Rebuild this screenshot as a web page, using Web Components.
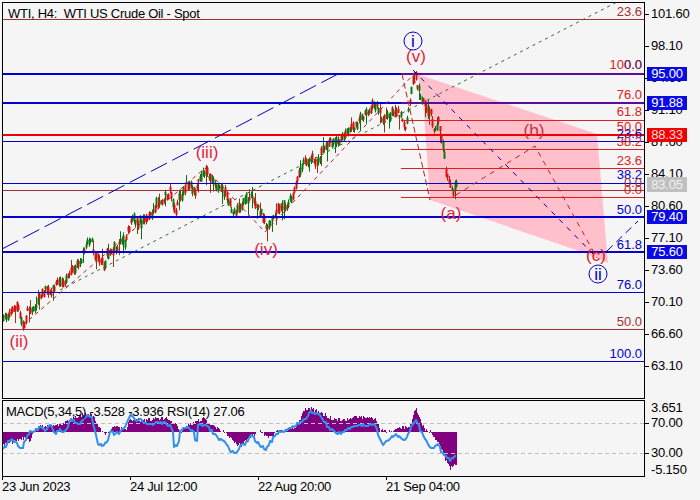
<!DOCTYPE html>
<html><head><meta charset="utf-8"><style>
html,body{margin:0;padding:0;background:#f5f5f5;}
body{width:700px;height:500px;overflow:hidden;font:12px "Liberation Sans",Arial,sans-serif;color:#000;}
</style></head><body>
<fx-chart>
  <price-pane slot="main">WTI, H4:&nbsp; WTI US Crude Oil - Spot</price-pane>
  <price-axis slot="main-axis"></price-axis>
  <osc-pane slot="sub">MACD(5,34,5) -3.528 -3.936 RSI(14) 27.06</osc-pane>
  <osc-axis slot="sub-axis"></osc-axis>
  <time-axis slot="time">
    <time-tick>23 Jun 2023</time-tick><time-tick>24 Jul 12:00</time-tick><time-tick>22 Aug 20:00</time-tick><time-tick>21 Sep 04:00</time-tick>
  </time-axis>
</fx-chart>
<script>
function rng(seed){let s=seed;return()=>{s=(s*1664525+1013904223)>>>0;return s/4294967296;};}
function interp(p,x){for(let i=1;i<p.length;i++){if(x<=p[i][0]){const a=p[i-1],b=p[i];return a[1]+(b[1]-a[1])*(x-a[0])/(b[0]-a[0]);}}return p[p.length-1][1];}
const PRICE=[[3,320],[7,315],[12,308],[18,306],[20,322],[23,328],[27,310],[30,308],[36,305],[40,296],[45,290],[50,295],[55,285],[60,280],[65,285],[70,270],[80,265],[83,250],[87,240],[90,238],[95,255],[100,262],[105,265],[107,252],[112,250],[118,245],[125,240],[130,225],[132,220],[140,222],[150,215],[155,205],[160,205],[165,195],[170,192],[175,212],[178,200],[187,184],[195,190],[203,172],[206,170],[210,180],[218,187],[225,193],[230,205],[235,217],[240,205],[245,200],[250,197],[255,203],[260,212],[265,225],[268,228],[272,218],[278,208],[285,207],[290,200],[295,190],[300,170],[305,160],[312,157],[316,163],[320,155],[325,148],[333,140],[340,142],[347,128],[352,130],[358,122],[365,115],[372,107],[377,105],[382,120],[388,115],[395,112],[400,115],[405,130],[410,95],[412,82],[415,77],[418,90],[423,100],[427,112],[430,110],[433,133],[438,123],[443,147],[445,170],[450,183],[453,192],[456,186]];
const HIST=[[3,445],[15,441],[25,437],[30,441],[33,432],[36,428],[40,426],[50,427],[60,425],[70,420],[80,415],[90,414],[95,420],[100,430],[105,434],[110,432],[113,426],[125,430],[130,420],[145,420],[165,418],[175,424],[180,432],[188,425],[195,422],[203,418],[210,425],[220,430],[225,432],[235,443],[240,446],[250,436],[260,432],[270,438],[275,432],[285,430],[295,427],[305,409],[310,408],[320,412],[330,418],[340,420],[350,418],[360,417],[375,418],[380,430],[385,432],[395,430],[400,428],[410,425],[415,408],[420,420],[425,430],[430,432],[433,437],[440,445],[445,460],[450,468],[456,463]];
const RSI=[[3,450],[8,442],[12,440],[18,445],[22,450],[25,440],[30,432],[35,430],[40,428],[45,430],[50,425],[55,433],[60,430],[65,432],[70,420],[80,423],[88,415],[92,418],[95,432],[98,445],[102,445],[107,443],[110,430],[115,435],[125,427],[130,415],[135,420],[140,420],[150,425],[155,423],[165,423],[172,428],[174,446],[178,446],[180,430],[185,428],[193,430],[196,445],[198,425],[205,425],[215,435],[220,440],[225,443],[230,450],[235,455],[240,445],[245,445],[250,435],[255,440],[260,445],[265,450],[272,440],[278,432],[285,432],[295,425],[305,420],[310,412],[320,415],[330,430],[340,433],[350,428],[360,425],[375,425],[378,435],[382,445],[388,440],[395,435],[405,440],[410,430],[416,418],[420,430],[425,440],[432,448],[438,445],[443,455],[450,460],[456,456]];

function candles(){
  const r=rng(77);let s='';
  for(let x=3;x<=456;x+=1.5){
    const px=Math.round(x);
    const c=interp(PRICE,x)+(r()-.5)*7;
    const up=r()<.42;
    const h=2+r()*6;
    const hi=c-h/2-r()*3-(r()<.1?6:0),lo=c+h/2+r()*3+(r()<.14?9:0);
    s+=`<path d="M${px+.5} ${hi.toFixed(1)}V${lo.toFixed(1)}" stroke="${up?'#0b6e12':'#8a3a10'}" stroke-width="1"/>`;
    s+=`<path d="M${px+.5} ${(c-h/2).toFixed(1)}V${(c+h/2).toFixed(1)}" stroke="${up?'#0a7a10':'#dc1010'}" stroke-width="2"/>`;
  }
  return s;
}
const H=(y,w,c,x1=3)=>`<line x1="${x1}" x2="644" y1="${y}" y2="${y}" stroke="${c}" stroke-width="${w}"/>`;
const BLUE='#0000d0',RED='#dc1c1c',DRED='#dc2020',BROWN='#a03034',WAVE='#e4203c';
const L=(t,y,c)=>`<text x="642" y="${y}" text-anchor="end" fill="${c}">${t}</text>`;
const W=(t,x,y,c=WAVE)=>`<text x="${x}" y="${y}" text-anchor="middle" fill="${c}" class="w">${t}</text>`;

class PricePane extends HTMLElement{
  constructor(){super();const sh=this.attachShadow({mode:'open'});
  sh.innerHTML=`<style>
  :host{display:block;position:relative;box-sizing:border-box;width:643px;height:397px;border:1px solid #000;background:#f5f5f5;overflow:hidden}
  svg{display:block;width:641px;height:395px}
  text{font:13px "Liberation Sans",Arial,sans-serif}
  text.w{font-size:17px}
  .t{position:absolute;left:5px;top:1px;font:13px/20px "Liberation Sans",Arial,sans-serif;letter-spacing:-.28px;color:#000;white-space:pre}
  </style>
  <svg viewBox="3 3 641 395" xmlns="http://www.w3.org/2000/svg">
  <polygon points="417,74 597,134 608,263 585,253 430,200 423,100" fill="#ffc0cb"/>
  <g>${candles()}</g>
  <g shape-rendering="crispEdges">
  ${H(19.5,1,BROWN)}
  ${H(74,2,BLUE)}${H(74,2,'#5a0c9c',401)}
  ${H(103,2,BLUE)}${H(103,2,'#5a0c9c',401)}
  ${H(120.5,1,DRED,401)}
  ${H(135,2,'#f00000')}
  ${H(141.5,1,BLUE)}
  ${H(149.5,1,DRED,401)}
  ${H(168.5,1,DRED,401)}
  ${H(183.5,1,BLUE)}
  ${H(190.5,1,BROWN)}
  ${H(197.5,1,DRED,401)}
  ${H(217,2,BLUE)}
  ${H(252,2,BLUE)}
  ${H(292.5,1,BLUE)}
  ${H(329.5,1,BROWN)}
  ${H(361.5,1,BLUE)}
  </g>
  <g fill="none" stroke-width="1">
    <path d="M2 249L338 74" stroke="#0000c0" stroke-dasharray="18 6"/>
    <path d="M607 251L638 221" stroke="#0000c0" stroke-dasharray="8 5"/>
    <path d="M60 290L617 2" stroke="#2c6e2c" stroke-dasharray="3 4"/>
    <path d="M23 325L205 168L265 232L415 73" stroke="#c02020" stroke-dasharray="4 4"/>
    <path d="M402 74L430 200" stroke="#c02020" stroke-dasharray="6 3"/>
    <path d="M413 70L597 258" stroke="#00008c" stroke-dasharray="5 6"/>
    <path d="M456 195L535 146L597 258" stroke="#c02020" stroke-dasharray="5 5"/>
  </g>
  <g>
  ${L('23.6',16,BROWN)}
  ${L('100.0',69,DRED)}${L('0.0',69,'#5a2a6a')}
  ${L('76.0',99,DRED)}
  ${L('61.8',116,DRED)}
  ${L('23.6',138,BLUE)}
  ${L('50.0',131,DRED)}
  ${L('38.2',146,DRED)}
  ${L('23.6',165,DRED)}
  ${L('38.2',179,BLUE)}
  ${L('0.0',187,BROWN)}
  ${L('0.0',194,DRED)}
  ${L('50.0',214,BLUE)}
  ${L('61.8',249,BLUE)}
  ${L('76.0',289,BLUE)}
  ${L('50.0',326,BROWN)}
  ${L('100.0',358,BLUE)}
  </g>
  ${W('(ii)',19,347)}${W('(iii)',207,158)}${W('(iv)',266,255)}${W('(v)',416,62)}
  ${W('(a)',451,219)}${W('(b)',534,136,'#c8303c')}${W('(c)',596,261,'#f01010')}
  <circle cx="413" cy="41" r="9" fill="none" stroke="#0000c8"/>
  <circle cx="598" cy="274" r="9" fill="none" stroke="#0000c8"/>
  ${W('i',413,47,'#0000c8')}${W('ii',598,280,'#0000c8')}
  </svg><div class="t"><slot></slot></div>`;}
}
class OscPane extends HTMLElement{
  constructor(){super();const sh=this.attachShadow({mode:'open'});
  const r=rng(5);let bars='';
  for(let x=3;x<=456;x++){const y=interp(HIST,x)+(r()-.5)*4;bars+=`<path d="M${x+.5} 432V${y.toFixed(1)}"/>`;}
  const r2=rng(9);let pts=[];
  for(let x=3;x<=456;x+=1.5){const y=interp(RSI,x)+(r2()-.5)*3;pts.push(Math.round(x)+','+Math.round(y));}
  sh.innerHTML=`<style>
  :host{display:block;position:relative;box-sizing:border-box;width:643px;height:77px;border:1px solid #000;background:#f5f5f5;overflow:hidden}
  svg{display:block;width:641px;height:75px}
  .t{position:absolute;left:3px;top:1px;font:13px/20px "Liberation Sans",Arial,sans-serif;letter-spacing:-.25px;color:#000;white-space:pre}
  </style>
  <svg viewBox="3 401 641 75" xmlns="http://www.w3.org/2000/svg">
  <g stroke="#800080" stroke-width="1" shape-rendering="crispEdges">${bars}</g>
  <g stroke="#c0c0c0" stroke-dasharray="4 3" shape-rendering="crispEdges"><line x1="3" x2="644" y1="423.5" y2="423.5"/><line x1="3" x2="644" y1="453.5" y2="453.5"/></g>
  <polyline points="${pts.join(' ')}" fill="none" stroke="#3090ee" stroke-width="2" stroke-linejoin="round"/>
  </svg><div class="t"><slot></slot></div>`;}
}
class PriceAxis extends HTMLElement{
  constructor(){super();const sh=this.attachShadow({mode:'open'});
  const vals=['101.60','98.10','94.60','91.10','87.60','84.10','80.60','77.10','73.60','70.10','66.60','63.10'];
  const tags=[['95.00',67,'#0a0ae6','#fff',14],['91.88',96,'#0a0ae6','#fff',14],['88.33',128,'#f00000','#ffd8d8',14],['83.05',177,'#c0c0c0','#f0f0f0',15],['79.40',210,'#0a0ae6','#fff',14],['75.60',245,'#0a0ae6','#fff',14]];
  sh.innerHTML=`<style>
  :host{display:flex;flex-direction:column;gap:16px;position:relative;box-sizing:border-box;width:55px;height:397px;padding-top:4px;font:13px/16px "Liberation Sans",Arial,sans-serif;letter-spacing:-.2px;color:#000;background:#f5f5f5}
  .r{display:flex;align-items:center;height:16px;flex:none}
  .r::before{content:"";width:4px;height:1px;background:#000;margin-right:2px}
  .tag{position:absolute;left:2px;width:40px;text-align:center;font:13px/14px "Liberation Sans",Arial,sans-serif}
  </style>${vals.map(v=>`<div class="r">${v}</div>`).join('')}
  ${tags.map(t=>`<div class="tag" style="top:${t[1]-2}px;height:${t[4]}px;line-height:${t[4]}px;background:${t[2]};color:${t[3]}">${t[0]}</div>`).join('')}`;}
}
class OscAxis extends HTMLElement{
  constructor(){super();const sh=this.attachShadow({mode:'open'});
  sh.innerHTML=`<style>
  :host{display:grid;grid-template-rows:14px 14px 14px 14px;box-sizing:border-box;width:55px;height:77px;padding-top:1px;font:13px/14px "Liberation Sans",Arial,sans-serif;letter-spacing:-.2px;color:#000;background:#f5f5f5}
  div{display:flex;align-items:center;padding-left:6px;position:relative;height:14px}
  .k::before{content:"";position:absolute;left:0;width:4px;height:1px;background:#000;top:7px}
  .a{margin-top:1px}.b{margin-top:17px}.c{margin-top:20px}
  </style><div>3.651</div><div class="k a">70.00</div><div class="k b">30.00</div><div class="c">-5.150</div>`;}
}
class TimeAxis extends HTMLElement{
  constructor(){super();this.attachShadow({mode:'open'}).innerHTML=`<style>
  :host{display:grid;grid-template-columns:repeat(4,128px);height:23px;padding-left:2px;font:13px/14px "Liberation Sans",Arial,sans-serif;letter-spacing:-.3px;color:#000}
  </style><slot></slot>`;}
}
class TimeTick extends HTMLElement{
  constructor(){super();this.attachShadow({mode:'open'}).innerHTML=`<style>
  :host{display:block;white-space:nowrap}
  i{display:block;width:1px;height:3px;background:#000}
  span{display:block;margin-top:0}
  </style><i></i><span><slot></slot></span>`;}
}
class FxChart extends HTMLElement{
  constructor(){super();this.attachShadow({mode:'open'}).innerHTML=`<style>
  :host{display:grid;grid-template-columns:643px 55px;grid-template-rows:397px 77px 23px;row-gap:1px;width:700px;height:500px;box-sizing:border-box;padding:2px 0 0 2px;background:#f5f5f5}
  .time{grid-column:1 / 3;margin-left:-2px;margin-top:-1px}
  </style>
  <slot name="main"></slot><slot name="main-axis"></slot><slot name="sub"></slot><slot name="sub-axis"></slot>
  <div class="time"><slot name="time"></slot></div>`;}
}
customElements.define('price-pane',PricePane);
customElements.define('osc-pane',OscPane);
customElements.define('price-axis',PriceAxis);
customElements.define('osc-axis',OscAxis);
customElements.define('time-tick',TimeTick);
customElements.define('time-axis',TimeAxis);
customElements.define('fx-chart',FxChart);
</script>
</body></html>
